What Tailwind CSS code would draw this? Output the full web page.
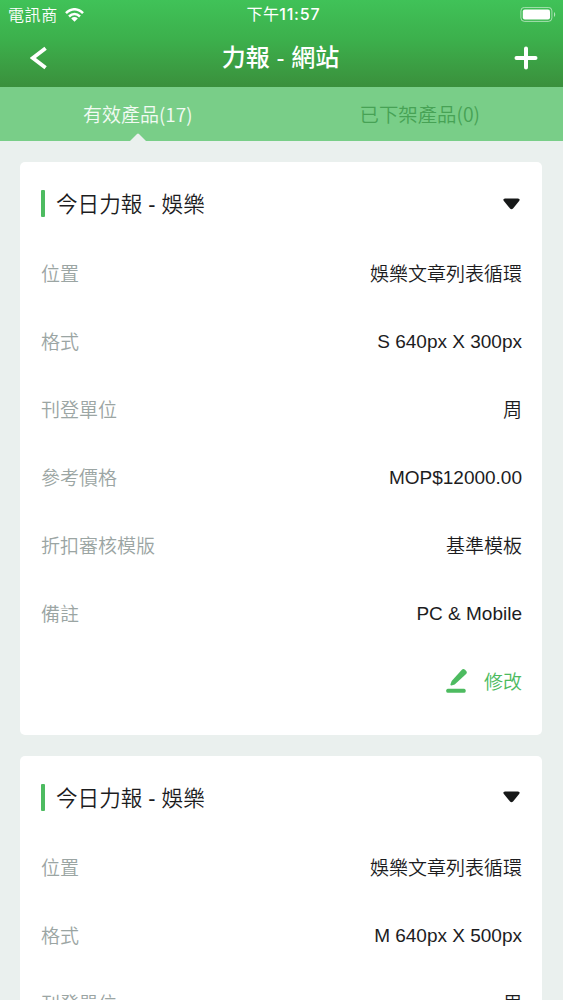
<!DOCTYPE html>
<html lang="zh-Hant">
<head>
<meta charset="utf-8">
<title>力報 - 網站</title>
<script src="https://cdn.jsdelivr.net/npm/@tailwindcss/browser@4"></script>
</head>
<body class="h-[1000px] overflow-hidden bg-[#eaf0ee] font-['Liberation_Sans','Noto_Sans_CJK_TC',sans-serif] text-[19px] text-[#1c1c1e]">
<header class="h-[87px] bg-linear-to-b from-[#40c258] via-[#3cb04c] via-45% to-[#3a903c] text-white">
  <div class="grid h-[29px] grid-cols-3 items-center pl-2 pr-[7px] text-[16px] leading-[29px]">
    <div class="flex items-center gap-[7px] tracking-[0.6px]"><span class="font-['Noto_Sans_CJK_TC',sans-serif] font-[350]">電訊商</span>
      <svg class="h-[14px] w-[19px]" viewBox="0 0 19 14" fill="none" stroke="currentColor" stroke-width="2.5"><path d="M1 5.2C6-.1 13-.1 18 5.2M4 8.5c3.400-3.300 7.600-3.300 11 0"/><path d="M9.500 13.700 6.200 10.400c1.900-1.800 4.700-1.800 6.600 0z" fill="currentColor" stroke="none"/></svg>
    </div>
    <div class="whitespace-nowrap pl-[3px] text-center font-['Inter','Noto_Sans_CJK_TC',sans-serif] font-medium tracking-[0.8px]"><span class="font-normal tracking-[0.3px]">下午</span>11:57</div>
    <svg class="h-4 w-9 justify-self-end" viewBox="0 0 36 16" fill="none"><rect x=".9" y=".4" width="31" height="14" rx="3.500" stroke="#fff" stroke-opacity=".55"/><rect x="2.800" y="2.400" width="27.200" height="10" rx="2" fill="#fff"/><path d="M34 5c1.600.7 1.600 4.300 0 5z" fill="#fff" fill-opacity=".6"/></svg>
  </div>
  <div class="flex h-[58px] items-center justify-between pl-[30px] pr-[25px]">
    <svg class="h-6 w-[17px]" viewBox="0 0 17 24" fill="none" stroke="currentColor" stroke-width="3.800"><path d="M15.600 2.200 2.800 12l12.800 9.800"/></svg>
    <h1 class="text-[24px] font-medium leading-none">力報 - 網站</h1>
    <svg class="h-6 w-6" viewBox="0 0 24 24" fill="none" stroke="currentColor" stroke-width="4" stroke-linecap="round"><path d="M12 2.500v19M2.500 12h19"/></svg>
  </div>
</header>
<nav class="grid h-[54px] grid-cols-2 bg-[#79ce88] text-center font-['Noto_Sans_CJK_TC',sans-serif] font-[350] leading-[54px]">
  <div class="relative pr-[6px] text-white/90">有效產品(17)
    <svg class="absolute bottom-0 left-[130px] h-2 w-4" viewBox="0 0 16 8" fill="#eaf0ee"><path d="M0 8 7 1Q8 0 9 1l7 7z"/></svg>
  </div>
  <div class="pr-[5px] text-[19.400px] text-[#47a255]">已下架產品(0)</div>
</nav>
<main class="flex flex-col gap-[20.5px] px-5 pt-[21px]" id="list"></main>
<template id="card">
  <article class="mr-px h-[573px] shrink-0 rounded-[5px] bg-white pl-[21px] pr-[20px] pt-[6px]">
    <div class="flex h-[71px] items-center">
      <i class="mr-[11px] h-[27px] w-1 rounded-[1px] bg-[#4dbb60]"></i>
      <h2 class="pt-[3px] text-[21.600px] font-[350] leading-none">今日力報 - 娛樂</h2>
      <svg class="ml-auto mr-[2px] h-3 w-[17px]" viewBox="0 0 17 12" fill="#161818"><path d="M2 .4h13q2.400.3 1.300 2.300L10 10.400Q8.500 12 7 10.400L.7 2.700Q-.4.700 2 .4z"/></svg>
    </div>
    <dl></dl>
    <div class="flex h-[68px] items-center justify-end text-[#4dbb60]">
      <svg class="mr-4 h-6 w-[22px]" viewBox="0 0 22 24" fill="currentColor"><rect x=".3" y="19.700" width="19.300" height="4" rx="1.500"/><path d="M15.600.9q1.800-1.500 3.400-.1l1.200 1.200q1.300 1.400-.1 3.100L8.700 15.600 5.400 16.600q-1.100-.1-1-1.200L5.700 12z"/></svg>
      <span class="pt-[4px] font-[350]">修改</span>
    </div>
  </article>
</template>
<script>
const list = document.getElementById('list'), card = document.getElementById('card');
for (const format of ['S 640px X 300px', 'M 640px X 500px']) {
  const node = card.content.cloneNode(true);
  const rows = [['位置','娛樂文章列表循環'],['格式',format],['刊登單位','周'],['參考價格','MOP$12000.00'],['折扣審核模版','基準模板'],['備註','PC & Mobile']];
  for (const [label, value] of rows) {
    const row = document.createElement('div');
    row.className = 'flex h-[68px] items-center justify-between pt-[3px]';
    const dt = document.createElement('dt'), dd = document.createElement('dd');
    dt.className = 'pt-[2px] font-[350] text-[#9ba5a3]';
    dt.textContent = label;
    dd.className = /^[A-Z]/.test(value) ? '' : 'pt-[2px] font-[350]';
    dd.textContent = value;
    row.append(dt, dd);
    node.querySelector('dl').append(row);
  }
  list.append(node);
}
</script>
</body>
</html>
